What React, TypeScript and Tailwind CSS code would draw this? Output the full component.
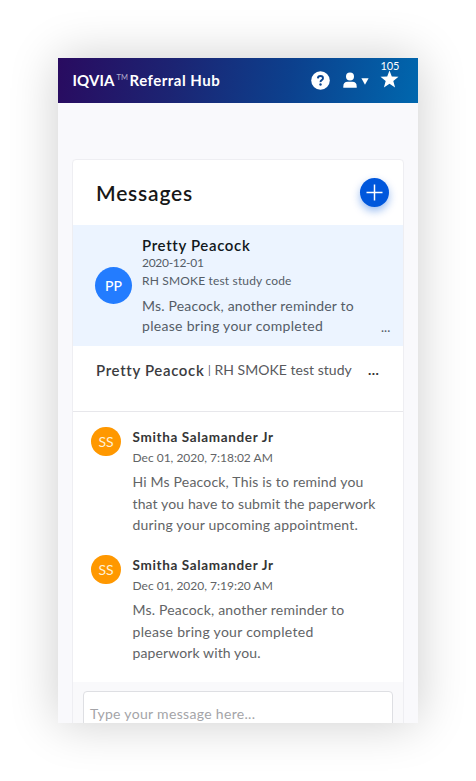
import React from "react";

type Message = { time: string; lines: { text: string; spacing: string }[] };

const messages: Message[] = [
  {
    time: "Dec 01, 2020, 7:18:02 AM",
    lines: [
      { text: "Hi Ms Peacock, This is to remind you", spacing: "tracking-[0.19px]" },
      { text: "that you have to submit the paperwork", spacing: "tracking-[0.12px]" },
      { text: "during your upcoming appointment.", spacing: "tracking-[0.2px]" },
    ],
  },
  {
    time: "Dec 01, 2020, 7:19:20 AM",
    lines: [
      { text: "Ms. Peacock, another reminder to", spacing: "tracking-[0.19px]" },
      { text: "please bring your completed", spacing: "tracking-[0.3px]" },
      { text: "paperwork with you.", spacing: "tracking-[0.11px]" },
    ],
  },
];

function HelpIcon() {
  return (
    <svg className="h-[19px] w-[19px]" viewBox="0 0 19 19">
      <circle cx="9.5" cy="9.5" r="9.3" fill="#fff" />
      <path d="M6.9 7.4Q7 5 9.5 5T12 7.2Q12 8.4 10.7 9.1T9.5 11.1" fill="none" stroke="#0b4590" strokeWidth="1.9" />
      <circle cx="9.5" cy="13.5" r="1.2" fill="#0b4590" />
    </svg>
  );
}

function UserIcon() {
  return (
    <svg className="h-4 w-[14px]" viewBox="0 0 14 16" fill="#fff">
      <circle cx="7" cy="4.4" r="4" />
      <path d="M.3 15.8v-1.4Q.3 9.8 4.7 9.8h4.6q4.4 0 4.4 4.6v1.4Z" />
    </svg>
  );
}

function Header() {
  return (
    <header className="flex h-[44.5px] shrink-0 items-center bg-linear-[100deg,#290b60_0%,#1c2473_32%,#0c408d_64%,#0067ae_100%] pl-[14.5px] text-white">
      <h1 className="flex w-[238px] shrink-0 items-center whitespace-nowrap text-[15px] font-bold leading-5">
        <span className="tracking-[0.1px]">IQVIA</span>
        <span className="ml-[2px] w-[13px] -mt-[5px] text-[7.5px] font-normal text-[#b4adcb]">TM</span>
        <span className="tracking-[0.5px]">Referral Hub</span>
      </h1>
      <HelpIcon />
      <span className="ml-[13px]"><UserIcon /></span>
      <svg className="ml-[4px] mt-[3px] h-[7px] w-2" viewBox="0 0 8 7" fill="#fff"><path d="M.4.2h7.2L4 6.8Z" /></svg>
      <div className="relative ml-[11px]">
        <svg className="mt-[-1px] h-[19px] w-[19px]" viewBox="0 0 19 19" fill="#fff">
          <path d="m9.5.5 2.3 6 6.7.2-5.2 4.2 1.8 6.6-5.6-3.7L3.9 17.5l1.8-6.6L.5 6.7l6.7-.2Z" />
        </svg>
        <span className="absolute left-px -top-[12px] text-[11px] leading-[14px] tracking-[-0.1px]">105</span>
      </div>
    </header>
  );
}

function Selected() {
  return (
    <section className="flex h-[121px] shrink-0 items-start bg-[#ecf4ff] pl-[22px]">
      <div className="mt-[42px] flex h-[37px] w-[37px] items-center justify-center rounded-full bg-[#237cff] text-[14px] font-medium text-white">PP</div>
      <div className="ml-[10px] mt-[11px] w-[234px] whitespace-nowrap text-[#555d67]">
        <h3 className="text-[15px] font-semibold leading-[19px] tracking-[0.65px] text-[#111820]">Pretty Peacock</h3>
        <p className="text-[12px] leading-4 -tracking-[0.3px]">2020-12-01</p>
        <p className="mt-[2px] text-[12px] leading-4 tracking-[0.17px]">RH SMOKE test study code</p>
        <p className="mt-[7px] text-[14px] leading-5 tracking-[0.19px]">Ms. Peacock, another reminder to</p>
        <p className="text-[14px] leading-5 tracking-[0.3px]">please bring your completed</p>
      </div>
      <span className="ml-[5px] mt-[94px] text-[13px] leading-4 text-[#555d67]">...</span>
    </section>
  );
}

function Bubble({ message }: { message: Message }) {
  return (
    <article className="flex h-32 shrink-0 items-start pl-[18px]">
      <div className="mt-[15px] flex h-[29px] w-[30px] items-center justify-center rounded-full bg-[#ff9800] text-[14px] text-[#fff1d7]">SS</div>
      <div className="ml-[11.5px] mt-[15px] whitespace-nowrap text-[#626466]">
        <h3 className="text-[13.5px] font-bold leading-[21px] tracking-[0.65px] text-[#343536]">Smitha Salamander Jr</h3>
        <p className="text-[12px] leading-5">{message.time}</p>
        <div className="mt-[3px] text-[14px] leading-[21.7px]">
          {message.lines.map((line) => <p key={line.text} className={line.spacing}>{line.text}</p>)}
        </div>
      </div>
    </article>
  );
}

export default function App() {
  return (
    <div className="h-[781px] w-[476px] overflow-hidden bg-white pl-[58px] pt-[58px] font-[Lato,sans-serif]">
      <div className="h-[665px] w-[360px] shadow-[0_0_46px_rgba(0,0,0,0.20)]">
        <main className="flex h-full flex-col overflow-hidden bg-[#f9f9fc]">
          <Header />
          <div className="mx-[14px] mt-[56.5px] flex h-[570px] shrink-0 flex-col overflow-hidden rounded-t border border-[#eeeef2] bg-white">
            <div className="flex h-[65px] shrink-0 items-center justify-between pl-[23px] pr-[14px]">
              <h2 className="text-[21px] font-semibold leading-7 tracking-[0.8px] text-[#171717]">Messages</h2>
              <button className="-mt-px flex h-[29px] w-[29px] items-center justify-center rounded-full bg-[#0057dc] shadow-[0_4px_9px_rgba(0,87,220,0.4)]">
                <svg className="h-[17px] w-[17px]" viewBox="0 0 17 17" stroke="#fff" strokeWidth="1.5"><path d="M8.5.5v16M.5 8.5h16" /></svg>
              </button>
            </div>
            <Selected />
            <div className="flex h-[66px] shrink-0 items-start border-b border-[#e7e7eb] pl-[23px] pt-[13px] text-[14px] leading-[22px] text-[#58595d]">
              <p className="flex w-[272px] whitespace-nowrap">
                <span className="text-[15px] font-semibold tracking-[0.65px] text-[#3b3c3f]">Pretty Peacock</span>
                <span className="w-[10px] text-center text-[11px]">|</span>
                <span className="tracking-[0.03px]">RH SMOKE test study</span>
              </p>
              <span className="font-bold tracking-[0.4px] text-[#333]">...</span>
            </div>
            {messages.map((message) => <Bubble key={message.time} message={message} />)}
            <div className="mt-[14px] h-[50px] shrink-0 bg-[#f9f9fb] px-[10px] pt-[9px]">
              <div className="h-[48px] rounded border border-[#dedfe3] bg-white pl-[6px] pt-[12px] text-[14px] leading-5 tracking-[0.32px] text-[#a4a4a8]">Type your message here...</div>
            </div>
          </div>
        </main>
      </div>
    </div>
  );
}
